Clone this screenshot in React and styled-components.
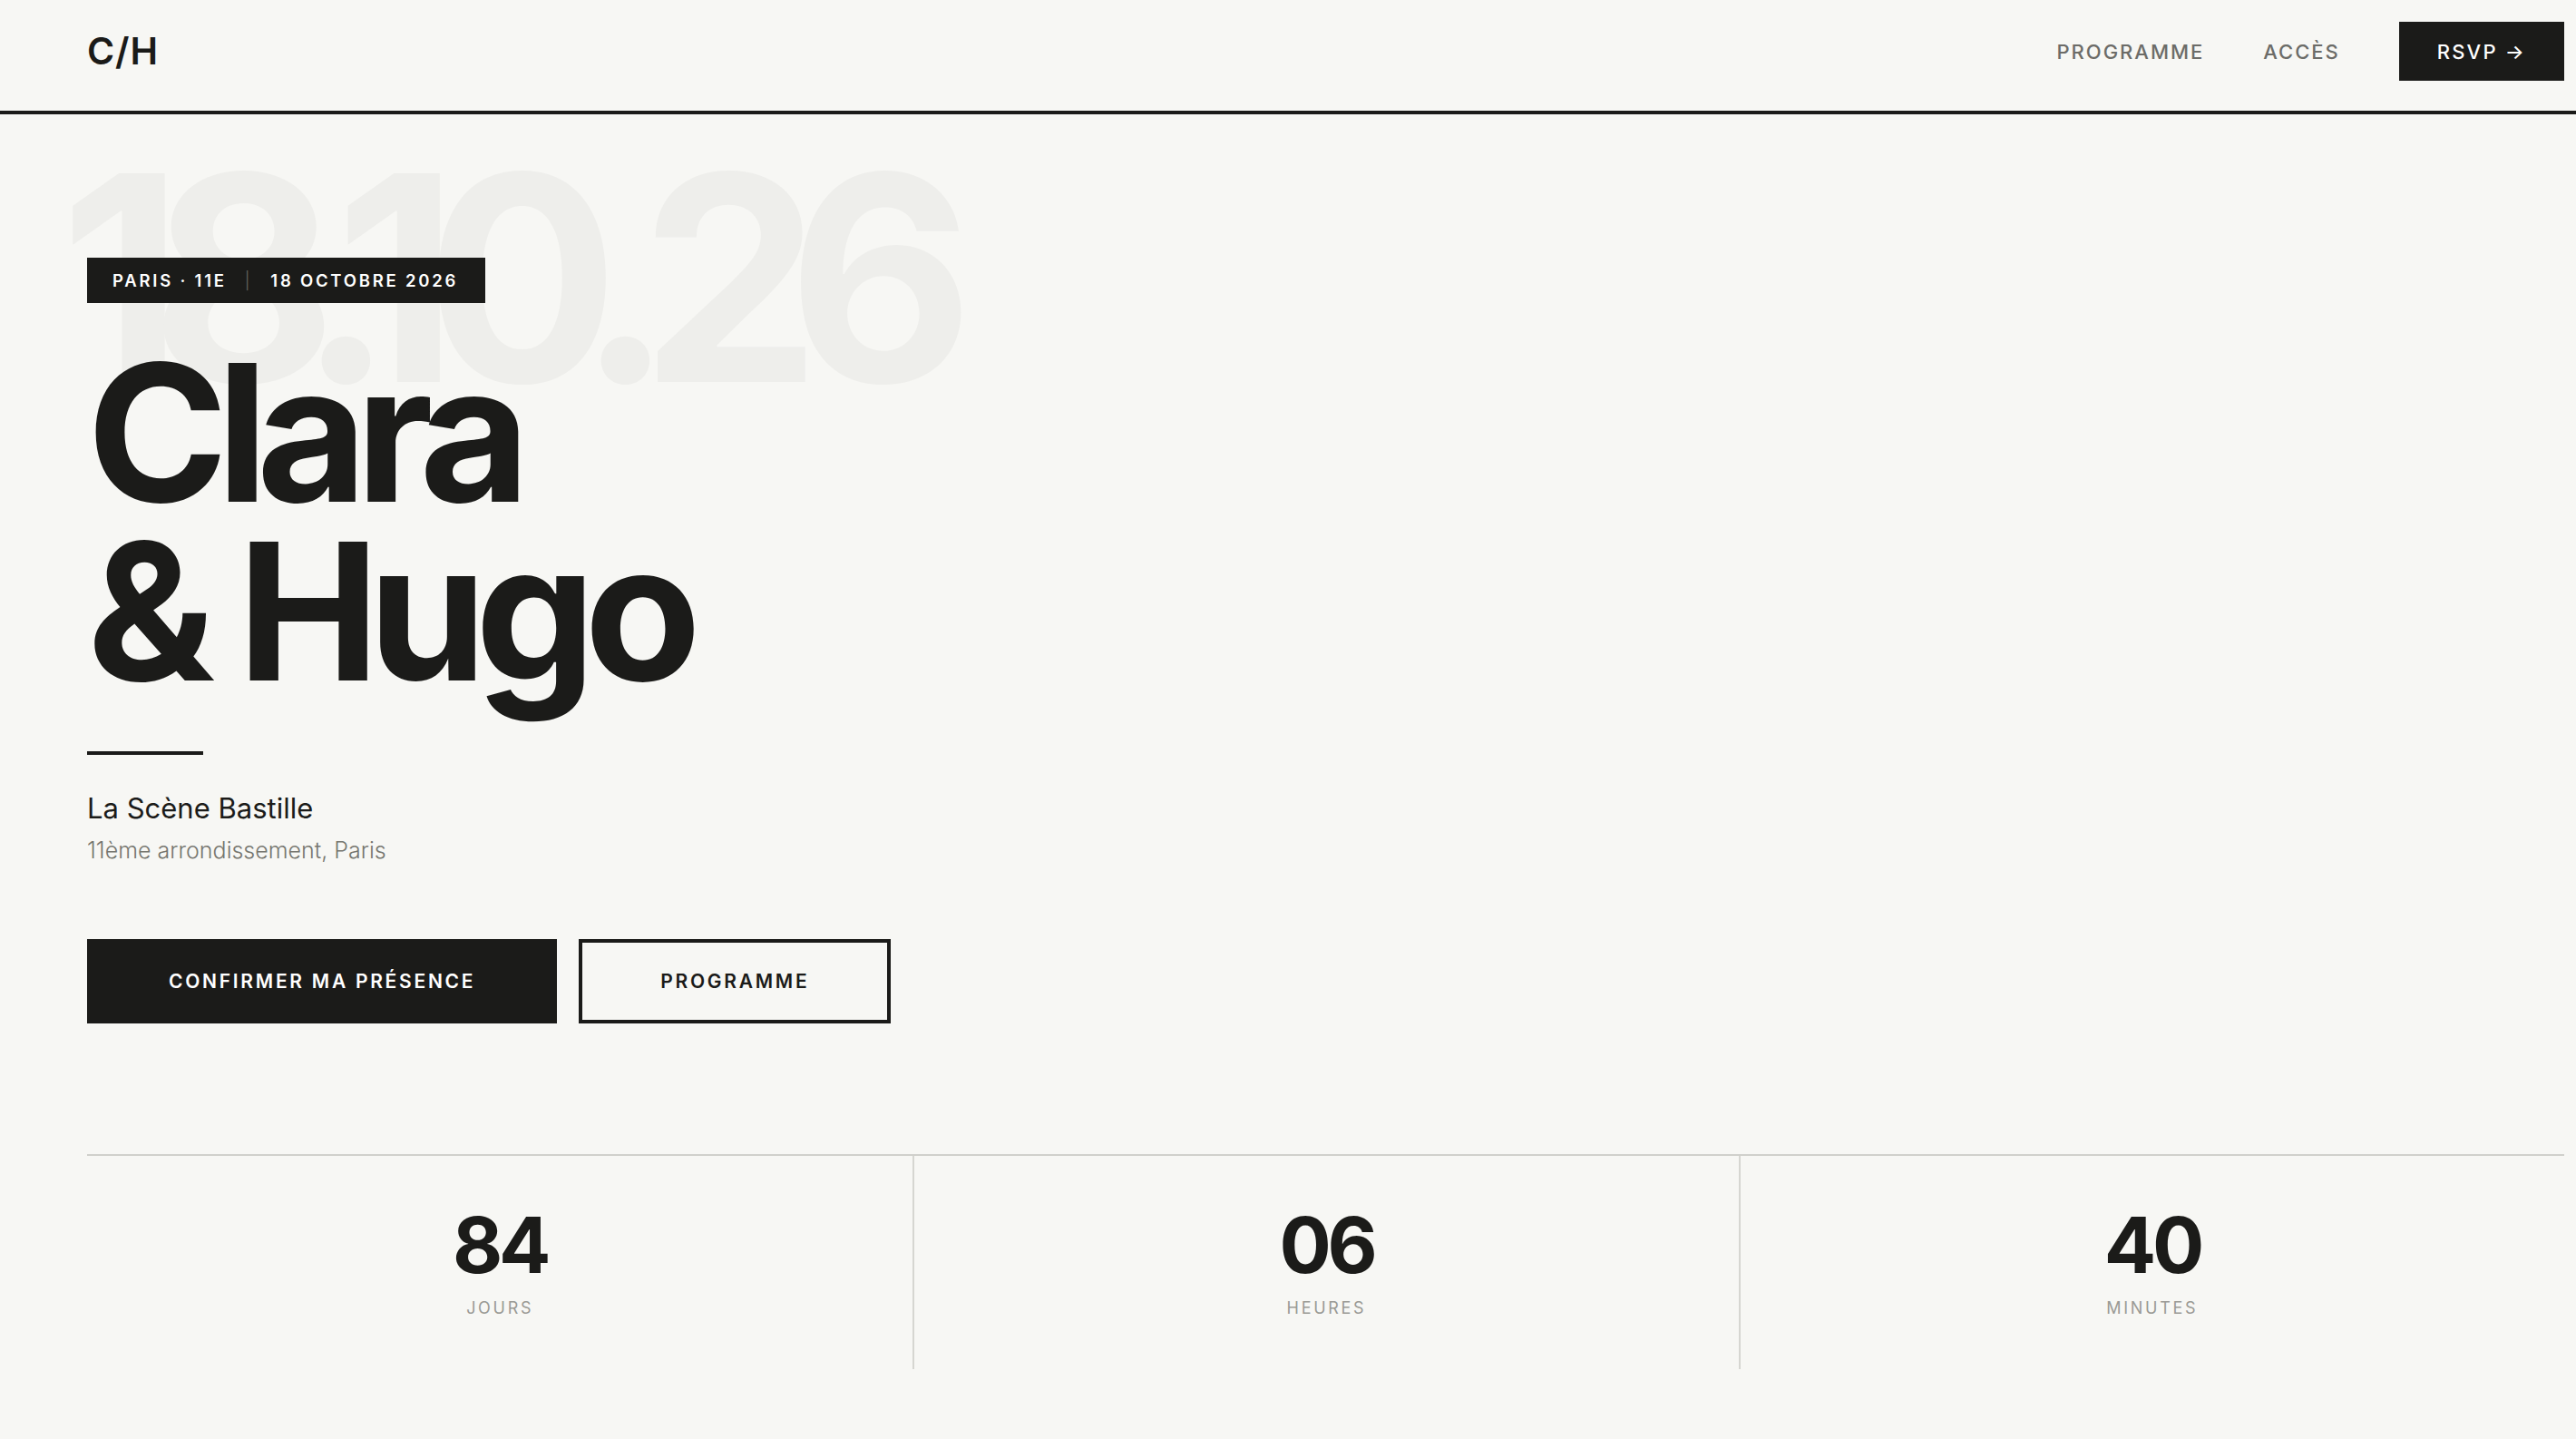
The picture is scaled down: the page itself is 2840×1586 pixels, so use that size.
import React from 'react';
import styled, { createGlobalStyle } from 'styled-components';

const GlobalStyle = createGlobalStyle`
	html, body {
		margin: 0;
		padding: 0;
		background: #f7f7f4;
	}
	body {
		font-family: Inter, 'Noto Sans', sans-serif;
		color: #1b1b19;
		overflow: hidden;
	}
	* {
		box-sizing: border-box;
	}
`;

const countdown = [
	{ value: '84', label: 'Jours' },
	{ value: '06', label: 'Heures' },
	{ value: '40', label: 'Minutes' },
];

export default function App() {
	return (
		<React.Fragment>
			<GlobalStyle />
			<Header>
				<Logo>C/H</Logo>
				<Nav>
					<NavLink href="#programme">Programme</NavLink>
					<NavLink href="#acces">Accès</NavLink>
					<RsvpButton href="#rsvp">RSVP →</RsvpButton>
				</Nav>
			</Header>
			<Hero>
				<HeroText>
					<BigDate aria-hidden="true">18.10.26</BigDate>
					<Tag>
						<span>Paris · 11e</span>
						<TagDivider>|</TagDivider>
						<span>18 octobre 2026</span>
					</Tag>
					<Title>
						Clara
						<br />
						&amp; Hugo
					</Title>
					<Rule />
					<Venue>La Scène Bastille</Venue>
					<Address>11ème arrondissement, Paris</Address>
					<Actions>
						<Button>Confirmer ma présence</Button>
						<Button outline>Programme</Button>
					</Actions>
				</HeroText>
				<Countdown>
					{countdown.map((item) => (
						<CountCell key={item.label}>
							<CountValue>{item.value}</CountValue>
							<CountLabel>{item.label}</CountLabel>
						</CountCell>
					))}
				</Countdown>
			</Hero>
		</React.Fragment>
	);
}

const Header = styled.header`
	display: flex;
	align-items: center;
	justify-content: space-between;
	padding: 24px 13px 33px 96px;
	border-bottom: 4px solid #1b1b19;
`;

const Logo = styled.div`
	font-size: 41px;
	font-weight: 600;
	letter-spacing: 0.02em;
	line-height: 1;
`;

const Nav = styled.nav`
	display: flex;
	align-items: center;
	gap: 65px;
`;

const NavLink = styled.a`
	font-size: 22px;
	font-weight: 500;
	letter-spacing: 0.09em;
	text-transform: uppercase;
	color: #6c6c68;
	text-decoration: none;
`;

const RsvpButton = styled.a`
	display: flex;
	align-items: center;
	height: 65px;
	padding: 0 42px;
	background: #1b1b19;
	color: #ffffff;
	font-size: 22px;
	font-weight: 500;
	letter-spacing: 0.1em;
	text-decoration: none;
`;

const Hero = styled.main`
	padding: 158px 13px 0 96px;
`;

const HeroText = styled.section`
	position: relative;
	display: flex;
	flex-direction: column;
	align-items: flex-start;
`;

const BigDate = styled.div`
	position: absolute;
	top: -136px;
	left: -30px;
	font-size: 316px;
	font-weight: 700;
	line-height: 1;
	letter-spacing: -0.115em;
	color: #eeeeeb;
	white-space: nowrap;
	pointer-events: none;
	user-select: none;
`;

const Tag = styled.div`
	position: relative;
	display: flex;
	align-items: center;
	height: 50px;
	padding: 0 30px 0 28px;
	background: #1b1b19;
	color: #ffffff;
	font-size: 18.5px;
	font-weight: 600;
	letter-spacing: 0.15em;
	text-transform: uppercase;
`;

const TagDivider = styled.span`
	margin: 0 20px;
	color: #6a6a64;
	font-weight: 300;
`;

const Title = styled.h1`
	position: relative;
	margin: 45px 0 0;
	font-size: 210px;
	font-weight: 700;
	line-height: 0.94;
	letter-spacing: -0.06em;
`;

const Rule = styled.div`
	width: 128px;
	height: 4px;
	margin-top: 54px;
	background: #1b1b19;
`;

const Venue = styled.p`
	margin: 39px 0 0;
	font-size: 31px;
	font-weight: 400;
	line-height: 1.3;
`;

const Address = styled.p`
	margin: 9px 0 0;
	font-size: 25px;
	font-weight: 300;
	line-height: 1.4;
	color: #76766f;
`;

const Actions = styled.div`
	display: flex;
	gap: 24px;
	margin-top: 80px;
`;

const Button = styled.button`
	display: flex;
	align-items: center;
	justify-content: center;
	height: 93px;
	padding: 0 86px;
	border: 4px solid #1b1b19;
	background: ${(p) => (p.outline ? 'transparent' : '#1b1b19')};
	color: ${(p) => (p.outline ? '#1b1b19' : '#ffffff')};
	font-family: inherit;
	font-size: 21px;
	font-weight: 600;
	letter-spacing: 0.13em;
	text-transform: uppercase;
	cursor: pointer;
`;

const Countdown = styled.div`
	display: grid;
	grid-template-columns: repeat(3, 1fr);
	margin-top: 144px;
	border-top: 2px solid #d0d0cb;
`;

const CountCell = styled.div`
	display: flex;
	flex-direction: column;
	align-items: center;
	padding: 56px 0;
	& + & {
		border-left: 2px solid #d6d6d1;
	}
`;

const CountValue = styled.div`
	font-size: 85px;
	font-weight: 700;
	line-height: 1;
	letter-spacing: -0.05em;
`;

const CountLabel = styled.div`
	margin-top: 16px;
	font-size: 18px;
	font-weight: 400;
	line-height: 1.2;
	letter-spacing: 0.15em;
	text-transform: uppercase;
	color: #9a9a95;
`;
